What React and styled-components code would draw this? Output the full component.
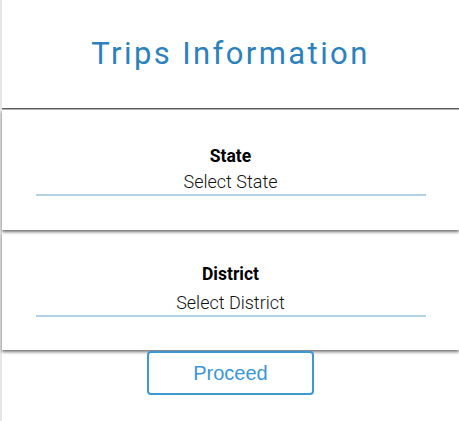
import React from "react";
import styled, { createGlobalStyle } from "styled-components";

const GlobalStyle = createGlobalStyle`
  body {
    margin: 0;
    font-family: Roboto, "Liberation Sans", sans-serif;
    background: #fff;
  }
`;

const fields = [
  { label: "State", placeholder: "Select State", top: 36, gap: 6, bottom: 34 },
  { label: "District", placeholder: "Select District", top: 32, gap: 9, bottom: 33 },
];

const App = () => {
  return (
    <Page>
      <GlobalStyle />
      <Title>Trips Information</Title>
      <Divider />
      {fields.map((f) => (
        <Card key={f.label} $top={f.top} $bottom={f.bottom}>
          <Label>{f.label}</Label>
          <Select $gap={f.gap}>{f.placeholder}</Select>
        </Card>
      ))}
      <Actions>
        <Proceed>Proceed</Proceed>
      </Actions>
    </Page>
  );
};

const Page = styled.div`
  border-left: 2px solid #e6e6e6;
  min-height: 421px;
  box-sizing: border-box;
  display: flex;
  flex-direction: column;
`;

const Title = styled.h1`
  margin: 0;
  padding-top: 35px;
  height: 108px;
  box-sizing: border-box;
  text-align: center;
  font-weight: 400;
  font-size: 31px;
  line-height: normal;
  letter-spacing: 2.4px;
  color: #2b81bd;
`;

const Divider = styled.div`
  border-top: 1px solid #5e5e5e;
  border-bottom: 1px solid #b5b5b5;
`;

const Card = styled.div`
  display: flex;
  flex-direction: column;
  align-items: center;
  padding: ${(p) => p.$top}px 0 ${(p) => p.$bottom}px;
  margin-bottom: 2px;
  box-shadow: 0 2px 3px rgba(0, 0, 0, 0.55);
`;

const Label = styled.div`
  font-weight: 700;
  font-size: 17.5px;
  color: #000;
  line-height: 20px;
`;

const Select = styled.div`
  width: 390px;
  margin-top: ${(p) => p.$gap}px;
  text-align: center;
  font-size: 18px;
  font-weight: 300;
  color: #111;
  line-height: 20px;
  padding-bottom: 2px;
  border-bottom: 2px solid #b3d2e6;
`;

const Actions = styled.div`
  display: flex;
  justify-content: center;
`;

const Proceed = styled.button`
  width: 167px;
  height: 44px;
  margin-top: -1px;
  border: 2px solid #3d98d6;
  border-radius: 4px;
  background: #fff;
  color: #3a97d8;
  font-family: "Liberation Sans", Arial, sans-serif;
  font-size: 20px;
`;

export default App;
